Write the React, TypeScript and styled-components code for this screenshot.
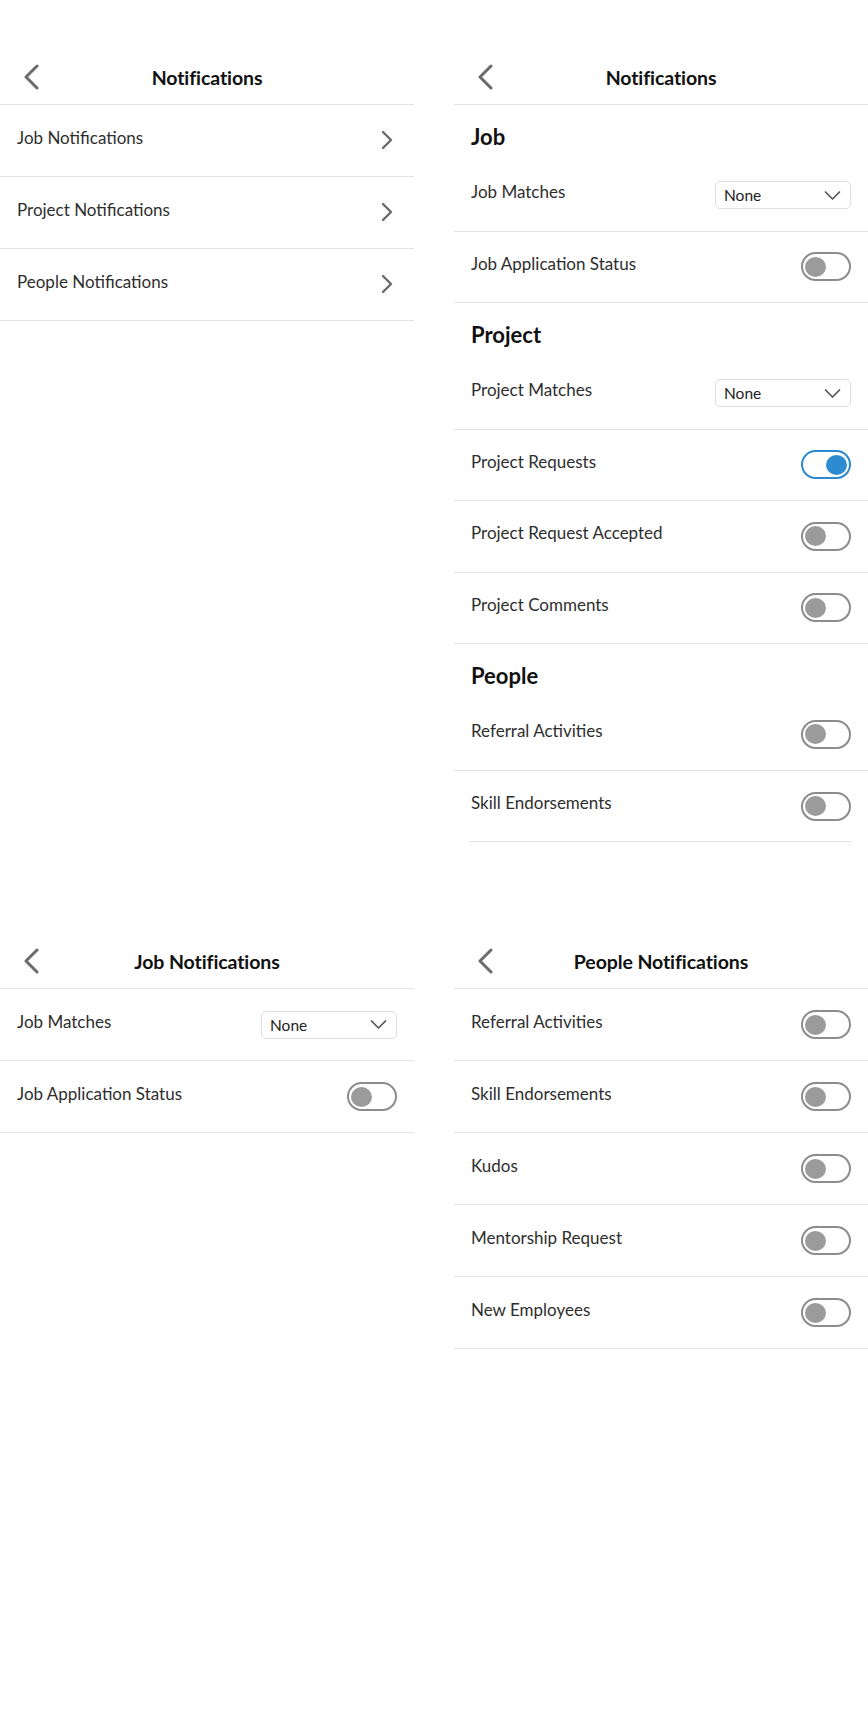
import React from "react";
import styled, { createGlobalStyle } from "styled-components";

const Global = createGlobalStyle`
  html, body { margin: 0; padding: 0; background: #ffffff; }
  body { font-family: Lato, "Open Sans", Roboto, sans-serif; color: #333333; }
  * { box-sizing: border-box; }
`;

const Page = styled.div`
  width: 868px;
  display: grid;
  grid-template-columns: 414px 414px;
  column-gap: 40px;
  row-gap: 91px;
  padding-top: 49px;
  align-items: start;
`;

const Panel = styled.section`
  display: flex;
  flex-direction: column;
`;

const Header = styled.header`
  height: 56px;
  display: grid;
  grid-template-columns: 56px 1fr 56px;
  align-items: center;
  border-bottom: 1px solid #e2e2e2;
`;

const BackButton = styled.button`
  border: 0;
  background: none;
  padding: 0 0 0 22px;
  height: 32px;
  display: flex;
  align-items: center;
  cursor: pointer;
`;

const Title = styled.h1`
  margin: 2px 0 0;
  text-align: center;
  font-size: 19.5px;
  font-weight: 700;
  color: #111111;
  letter-spacing: -0.1px;
`;

const Row = styled.div<{ $h?: number; $inset?: boolean }>`
  height: ${(p) => p.$h ?? 72}px;
  display: flex;
  align-items: center;
  justify-content: space-between;
  padding: 0 17px;
  border-bottom: ${(p) => (p.$inset ? "none" : "1px solid #e2e2e2")};
  position: relative;
  ${(p) =>
    p.$inset
      ? `&::after { content: ""; position: absolute; left: 15px; right: 16px; bottom: 0; height: 1px; background: #e2e2e2; }`
      : ""}
`;

const Label = styled.span`
  font-size: 17px;
  color: #2e2e2e;
  margin-top: -7px;
`;

const Arrow = styled.span`
  display: flex;
  margin-right: 3px;
  margin-top: -2px;
`;

const SectionTitle = styled.h2`
  margin: 0;
  height: 55px;
  padding: 20px 17px 0;
  font-size: 22px;
  line-height: 24px;
  font-weight: 700;
  color: #111111;
`;

const Select = styled.div`
  width: 136px;
  height: 28px;
  border: 1px solid #dedede;
  border-radius: 5px;
  display: flex;
  align-items: center;
  justify-content: space-between;
  padding: 0 9px 0 8px;
  font-size: 15.5px;
  color: #222222;
`;

const Switch = styled.div<{ $on?: boolean }>`
  width: 50px;
  height: 29px;
  border-radius: 15px;
  border: 2px solid ${(p) => (p.$on ? "#2b8ad0" : "#8c8c8c")};
  display: flex;
  align-items: center;
  justify-content: ${(p) => (p.$on ? "flex-end" : "flex-start")};
  padding: 0 2px;
`;

const Knob = styled.span<{ $on?: boolean }>`
  width: 21px;
  height: 20px;
  border-radius: 50%;
  background: ${(p) => (p.$on ? "#2d8bd1" : "#9b9b9b")};
`;

const BackIcon = () => (
  <svg width="18" height="26" viewBox="0 0 18 26" fill="none">
    <path d="M15 2 L4 13 L15 24" stroke="#6b6b6b" strokeWidth="3" strokeLinecap="round" strokeLinejoin="round" />
  </svg>
);

const ChevronRight = () => (
  <svg width="14" height="20" viewBox="0 0 14 20" fill="none">
    <path d="M3 2 L11 10 L3 18" stroke="#6b6b6b" strokeWidth="2.4" strokeLinecap="round" strokeLinejoin="round" />
  </svg>
);

const ChevronDown = () => (
  <svg width="17" height="11" viewBox="0 0 17 11" fill="none">
    <path d="M1.5 2 L8.5 9 L15.5 2" stroke="#555555" strokeWidth="1.7" strokeLinecap="round" strokeLinejoin="round" />
  </svg>
);

const ScreenHeader = ({ title }: { title: string }) => (
  <Header>
    <BackButton aria-label="Back">
      <BackIcon />
    </BackButton>
    <Title>{title}</Title>
    <span />
  </Header>
);

const Dropdown = () => (
  <Select>
    <span>None</span>
    <ChevronDown />
  </Select>
);

const Toggle = ({ on }: { on?: boolean }) => (
  <Switch $on={on}>
    <Knob $on={on} />
  </Switch>
);

type Item = { label: string; kind: "select" | "toggle"; on?: boolean };

const ToggleRows = ({ items, h, insetLast }: { items: Item[]; h?: number; insetLast?: boolean }) => (
  <>
    {items.map((it, i) => (
      <Row key={it.label} $h={h} $inset={insetLast && i === items.length - 1}>
        <Label>{it.label}</Label>
        {it.kind === "select" ? <Dropdown /> : <Toggle on={it.on} />}
      </Row>
    ))}
  </>
);

export default function App() {
  return (
    <>
      <Global />
      <Page>
        <Panel>
          <ScreenHeader title="Notifications" />
          {["Job Notifications", "Project Notifications", "People Notifications"].map((l) => (
            <Row key={l}>
              <Label>{l}</Label>
              <Arrow>
                <ChevronRight />
              </Arrow>
            </Row>
          ))}
        </Panel>

        <Panel>
          <ScreenHeader title="Notifications" />
          <SectionTitle>Job</SectionTitle>
          <ToggleRows
            h={71.5}
            items={[
              { label: "Job Matches", kind: "select" },
              { label: "Job Application Status", kind: "toggle" },
            ]}
          />
          <SectionTitle>Project</SectionTitle>
          <ToggleRows
            h={71.5}
            items={[
              { label: "Project Matches", kind: "select" },
              { label: "Project Requests", kind: "toggle", on: true },
              { label: "Project Request Accepted", kind: "toggle" },
              { label: "Project Comments", kind: "toggle" },
            ]}
          />
          <SectionTitle>People</SectionTitle>
          <ToggleRows
            h={71.5}
            insetLast
            items={[
              { label: "Referral Activities", kind: "toggle" },
              { label: "Skill Endorsements", kind: "toggle" },
            ]}
          />
        </Panel>

        <Panel>
          <ScreenHeader title="Job Notifications" />
          <ToggleRows
            items={[
              { label: "Job Matches", kind: "select" },
              { label: "Job Application Status", kind: "toggle" },
            ]}
          />
        </Panel>

        <Panel>
          <ScreenHeader title="People Notifications" />
          <ToggleRows
            items={[
              { label: "Referral Activities", kind: "toggle" },
              { label: "Skill Endorsements", kind: "toggle" },
              { label: "Kudos", kind: "toggle" },
              { label: "Mentorship Request", kind: "toggle" },
              { label: "New Employees", kind: "toggle" },
            ]}
          />
        </Panel>
      </Page>
    </>
  );
}
